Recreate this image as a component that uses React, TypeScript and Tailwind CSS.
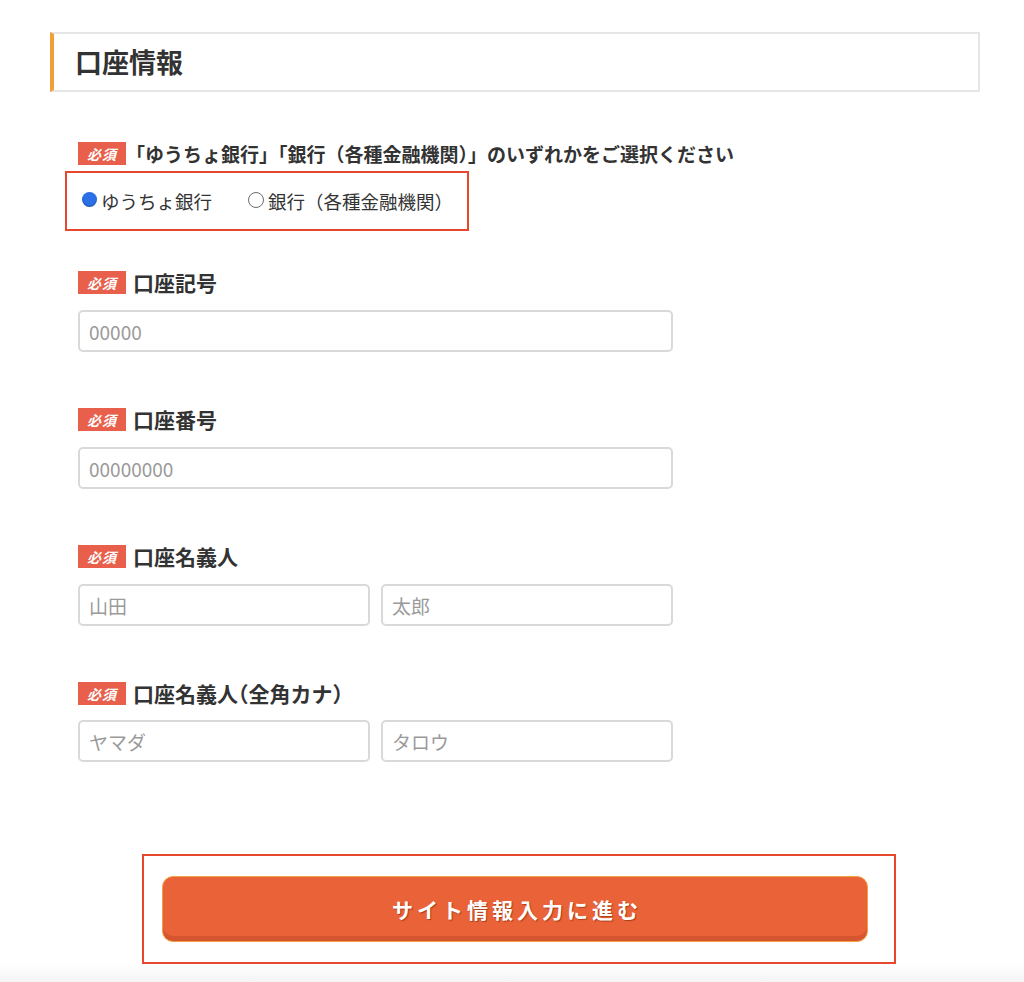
import { useState } from "react";

const font = { fontFamily: '"Noto Sans CJK JP", "Noto Sans", sans-serif' };

const Badge = () => (
  <span className="inline-flex h-[23px] w-[48px] shrink-0 items-center justify-center bg-[#e8604b] text-[14px] font-bold italic leading-none tracking-[1px] text-white">
    必須
  </span>
);

const FieldLabel = ({ text }: { text: string }) => (
  <div className="flex h-[23px] items-center gap-[7px]">
    <Badge />
    <span className="text-[21px] font-bold leading-none text-[#333] [font-feature-settings:'halt']">{text}</span>
  </div>
);

const TextInput = ({ placeholder, className = "" }: { placeholder: string; className?: string }) => (
  <input
    type="text"
    placeholder={placeholder}
    className={`h-[42px] rounded-[5px] border-2 border-[#d9d9d9] bg-white px-[9px] text-[19px] text-[#333] outline-none placeholder:text-[#9a9a9a] ${className}`}
  />
);

const Radio = ({ checked, label, onClick }: { checked: boolean; label: string; onClick: () => void }) => (
  <label className="flex cursor-pointer items-center gap-[4px]" onClick={onClick}>
    {checked ? (
      <span className="mb-[3px] h-[15px] w-[15px] rounded-full bg-[#2b70e6] shadow-[inset_0_-1px_2px_rgba(0,0,0,0.25)]"></span>
    ) : (
      <span className="mb-[3px] h-[16px] w-[16px] rounded-full border border-[#6b6b6b] bg-white"></span>
    )}
    <span className="text-[18.5px] leading-none text-[#333]">{label}</span>
  </label>
);

export default function App() {
  const [bank, setBank] = useState<"yucho" | "bank">("yucho");

  return (
    <div className="flex min-h-[982px] w-full flex-col bg-white" style={font}>
      <div className="pl-[50px] pr-[44px] pt-[32px]">
        {/* heading */}
        <div className="flex h-[60px] items-center border-2 border-l-[4px] border-[#e6e6e6] border-l-[#f1a038] pl-[21px]">
          <h2 className="text-[27px] font-bold text-[#333]">口座情報</h2>
        </div>

        <div className="pl-[28px]">
          {/* bank type */}
          <div className="mt-[50px]">
            <div className="flex h-[23px] items-center gap-0">
              <Badge />
              <span className="text-[19px] font-bold leading-none text-[#333]">
                「ゆうちょ銀行」「銀行（各種金融機関）」のいずれかをご選択ください
              </span>
            </div>
            <div className="ml-[-13px] mt-[6px] flex h-[60px] w-[404px] items-center gap-[36px] border-2 border-[#e8472f] pl-[15px]">
              <Radio checked={bank === "yucho"} label="ゆうちょ銀行" onClick={() => setBank("yucho")} />
              <Radio checked={bank === "bank"} label="銀行（各種金融機関）" onClick={() => setBank("bank")} />
            </div>
          </div>

          {/* account code */}
          <div className="mt-[40px]">
            <FieldLabel text="口座記号" />
            <TextInput placeholder="00000" className="mt-[16px] w-[595px]" />
          </div>

          {/* account number */}
          <div className="mt-[56px]">
            <FieldLabel text="口座番号" />
            <TextInput placeholder="00000000" className="mt-[16px] w-[595px]" />
          </div>

          {/* holder */}
          <div className="mt-[56px]">
            <FieldLabel text="口座名義人" />
            <div className="mt-[16px] flex w-[595px] gap-[11px]">
              <TextInput placeholder="山田" className="w-[292px]" />
              <TextInput placeholder="太郎" className="w-[292px]" />
            </div>
          </div>

          {/* holder kana */}
          <div className="mt-[56px]">
            <FieldLabel text="口座名義人（全角カナ）" />
            <div className="mt-[15px] flex w-[595px] gap-[11px]">
              <TextInput placeholder="ヤマダ" className="w-[292px]" />
              <TextInput placeholder="タロウ" className="w-[292px]" />
            </div>
          </div>
        </div>

        {/* submit */}
        <div className="ml-[92px] mt-[92px] flex h-[110px] w-[754px] items-center border-2 border-[#e8472f] pl-[18px]">
          <button className="flex h-[66px] w-[706px] items-center justify-center rounded-[11px] border border-[#f0a045] bg-[#ea6237] pl-[4px] pt-[2px] text-[21px] font-bold tracking-[4px] text-white shadow-[inset_0_-5px_0_#d4552f] [text-shadow:1px_1px_1px_rgba(120,40,10,0.6)]">
            サイト情報入力に進む
          </button>
        </div>
      </div>
      <div className="flex-1 bg-gradient-to-b from-white to-[#f4f4f4]"></div>
    </div>
  );
}
